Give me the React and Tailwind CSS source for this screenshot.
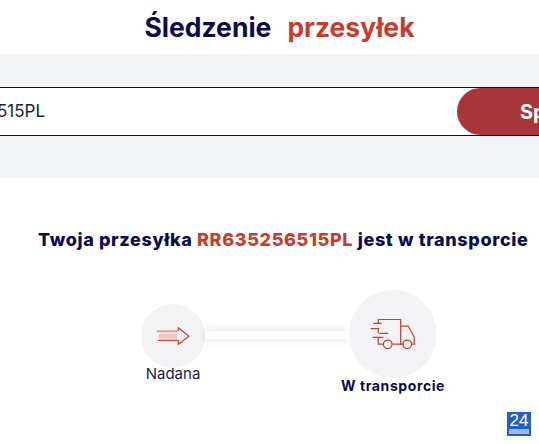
import React from 'react';

function ParcelIcon() {
  return (
    <svg width="34" height="18" viewBox="26 45 34 18" fill="none" stroke="#c8402f" strokeWidth="1.2">
      <path d="M26.7 49.3H48" stroke="#e39a90" strokeWidth="2" />
      <path d="M28 58.3H48.3V62.3L59 54.3L48.3 45.7V49" />
      <path d="M30 51.7V56.7M32 51.7V56.7M34 51.7V56.7M36 51.7V56.7M38 51.7V56.7M40 51.7V56.7M42 51.7V56.7M44 51.7V56.7M46 51.7V56.7" stroke="#e39a90" strokeWidth="1" />
    </svg>
  );
}

function TruckIcon() {
  return (
    <svg width="46" height="30" viewBox="40 39 46 30" fill="none" stroke="#c8402f" strokeWidth="1.25">
      <path d="M48.3 43.3V39.3H70.7V64H72.7" />
      <path d="M70.7 46H78.3L84.3 57.3V64H82" />
      <path d="M43.3 43.3H51.7M40.7 48.7H49.3M48.3 48.7V53.3M49.3 53.3H58.3M42.7 57.3H53.3M48.3 57.3V64H53.3M62.3 64H72.7" />
      <circle cx="57.7" cy="64.3" r="4.3" />
      <circle cx="77.3" cy="64.3" r="4.3" />
    </svg>
  );
}

export default function App() {
  return (
    <div className="relative h-[444px] w-[539px] overflow-hidden bg-white font-['Inter',sans-serif]">
      {/* heading */}
      <h1 className="flex h-[54px] items-center justify-center gap-[16px] pt-[1px] pl-[20px] text-[26.5px] font-bold text-[#0b0a4f]">
        <span>Śledzenie</span>
        <span className="text-[#c53d2d]">przesyłek</span>
      </h1>

      {/* search band */}
      <div className="flex h-[124px] w-[539px] items-start overflow-hidden bg-[#f3f4f6] pt-[33px]">
        <div className="ml-[-90px] flex h-[49px] w-[800px] shrink-0 items-center border-y border-[#0b0a4f] bg-white">
          <span className="w-[547px] shrink-0 text-right">
            <span className="mr-[412px] text-[17px] text-[#1a1a4a]">RR635256515PL</span>
          </span>
          <button className="flex h-[47px] w-[240px] shrink-0 items-center rounded-l-[24px] bg-[#a6363a] pl-[63px] text-[20px] font-bold text-white">
            Sprawdź
          </button>
        </div>
      </div>

      {/* status */}
      <p className="mt-[50px] pl-[38px] text-[18px] leading-[24px] font-extrabold tracking-[0.64px] whitespace-nowrap text-[#0b0a4f]">
        Twoja przesyłka <span className="text-[#c53d2d]">RR635256515PL</span> jest w transporcie
      </p>

      {/* steps */}
      <div className="mt-[38px] flex items-start pl-[141px]">
        <div className="mt-[14px] flex w-[64px] flex-col items-center">
          <div className="flex h-[64px] w-[64px] items-center justify-center rounded-full bg-[#f3f3f5]">
            <ParcelIcon />
          </div>
          <span className="mt-[-4px] text-[15px] leading-[20px] whitespace-nowrap text-[#1a1a4a]">Nadana</span>
        </div>
        <div className="mt-[41px] h-[8px] w-[144px] bg-white shadow-[0_0_10px_rgba(0,0,0,0.14)]"></div>
        <div className="flex w-[88px] flex-col items-center">
          <div className="flex h-[88px] w-[88px] items-center justify-center rounded-full bg-[#f3f3f5]">
            <TruckIcon />
          </div>
          <span className="mt-[-2px] text-[14px] leading-[20px] font-bold tracking-[0.6px] whitespace-nowrap text-[#0b0a4f]">W transporcie</span>
        </div>
      </div>

      {/* 24 badge */}
      <div className="absolute top-[412px] left-[507px] flex h-[24px] w-[24px] flex-col items-center bg-[#2260c4]">
        <span className="font-['Liberation_Sans',sans-serif] text-[17px] leading-[17px] text-white">24</span>
        <span className="h-[5px] w-[20px] bg-[#9db8e6]"></span>
      </div>
    </div>
  );
}
